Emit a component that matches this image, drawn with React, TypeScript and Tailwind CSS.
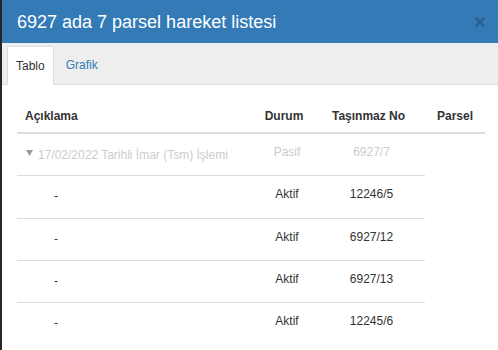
import React from 'react';

const rows = [
  { durum: 'Aktif', no: '12246/5' },
  { durum: 'Aktif', no: '6927/12' },
  { durum: 'Aktif', no: '6927/13' },
  { durum: 'Aktif', no: '12245/6' },
];

export default function App() {
  return (
    <div
      className="flex w-[498px] h-[350px] overflow-hidden bg-[#2a2426]"
      style={{ fontFamily: '"Liberation Sans", Arial, sans-serif' }}
    >
      <div className="w-[2px] shrink-0" />
      <div className="flex flex-1 flex-col bg-white">
        {/* başlık */}
        <header className="flex h-[43px] items-center justify-between bg-[#337ab7] pl-[15px] pr-[12px]">
          <h1 className="text-[18px] leading-none text-white">{'6927 ada 7 parsel hareket listesi'}</h1>
          <span className="text-[21px] font-bold leading-none text-black opacity-20">{'×'}</span>
        </header>

        {/* sekmeler */}
        <nav className="flex h-[42px] items-end border-b border-[#ddd] bg-[#eee] pl-[5px]">
          <button className="-mb-px flex h-[39px] items-center border border-b-transparent border-[#ddd] bg-white px-[8px] text-[12px] text-[#333]">
            {'Tablo'}
          </button>
          <button className="ml-[4px] flex h-[39px] items-center px-[8px] text-[12px] text-[#337ab7]">
            {'Grafik'}
          </button>
        </nav>

        {/* tablo */}
        <div className="pl-[15px] pt-[14px]">
          <div className="grid h-[35px] w-[468px] grid-cols-[239px_56px_113px_60px] items-center border-b-2 border-[#ddd] text-[12px] font-bold text-[#333]">
            <span className="pl-[8px]">{'Açıklama'}</span>
            <span className="text-center">{'Durum'}</span>
            <span className="text-center">{'Taşınmaz No'}</span>
            <span className="text-center">{'Parsel'}</span>
          </div>

          <div className="grid h-[42px] w-[408px] grid-cols-[239px_56px_113px] border-b border-[#ddd] text-[12px] leading-[17px] text-[#ccc]">
            <div className="flex items-start gap-[5px] pl-[9px] pt-[13px]">
              <svg width="7" height="6" viewBox="0 0 7 6" className="mt-[3px] shrink-0">
                <path d="M0 0 H7 L3.5 6 Z" fill="#999" />
              </svg>
              <span>{'17/02/2022 Tarihli İmar (Tsm) İşlemi'}</span>
            </div>
            <span className="pl-[6px] pt-[10px] text-center">{'Pasif'}</span>
            <span className="pl-[6px] pt-[10px] text-center">{'6927/7'}</span>
          </div>

          {rows.map((r, i) => (
            <div
              key={r.no}
              className={
                i === 0
                  ? 'grid h-[43px] w-[408px] grid-cols-[239px_56px_113px] border-b border-[#ddd] text-[12px] leading-[17px] text-[#333]'
                  : i === rows.length - 1
                    ? 'grid h-[42px] w-[408px] grid-cols-[239px_56px_113px] text-[12px] leading-[17px] text-[#333]'
                    : 'grid h-[42px] w-[408px] grid-cols-[239px_56px_113px] border-b border-[#ddd] text-[12px] leading-[17px] text-[#333]'
              }
            >
              <span className="pl-[37px] pt-[12px]">{'-'}</span>
              <span className="pl-[6px] pt-[10px] text-center">{r.durum}</span>
              <span className="pl-[6px] pt-[10px] text-center">{r.no}</span>
            </div>
          ))}
        </div>
      </div>
    </div>
  );
}
